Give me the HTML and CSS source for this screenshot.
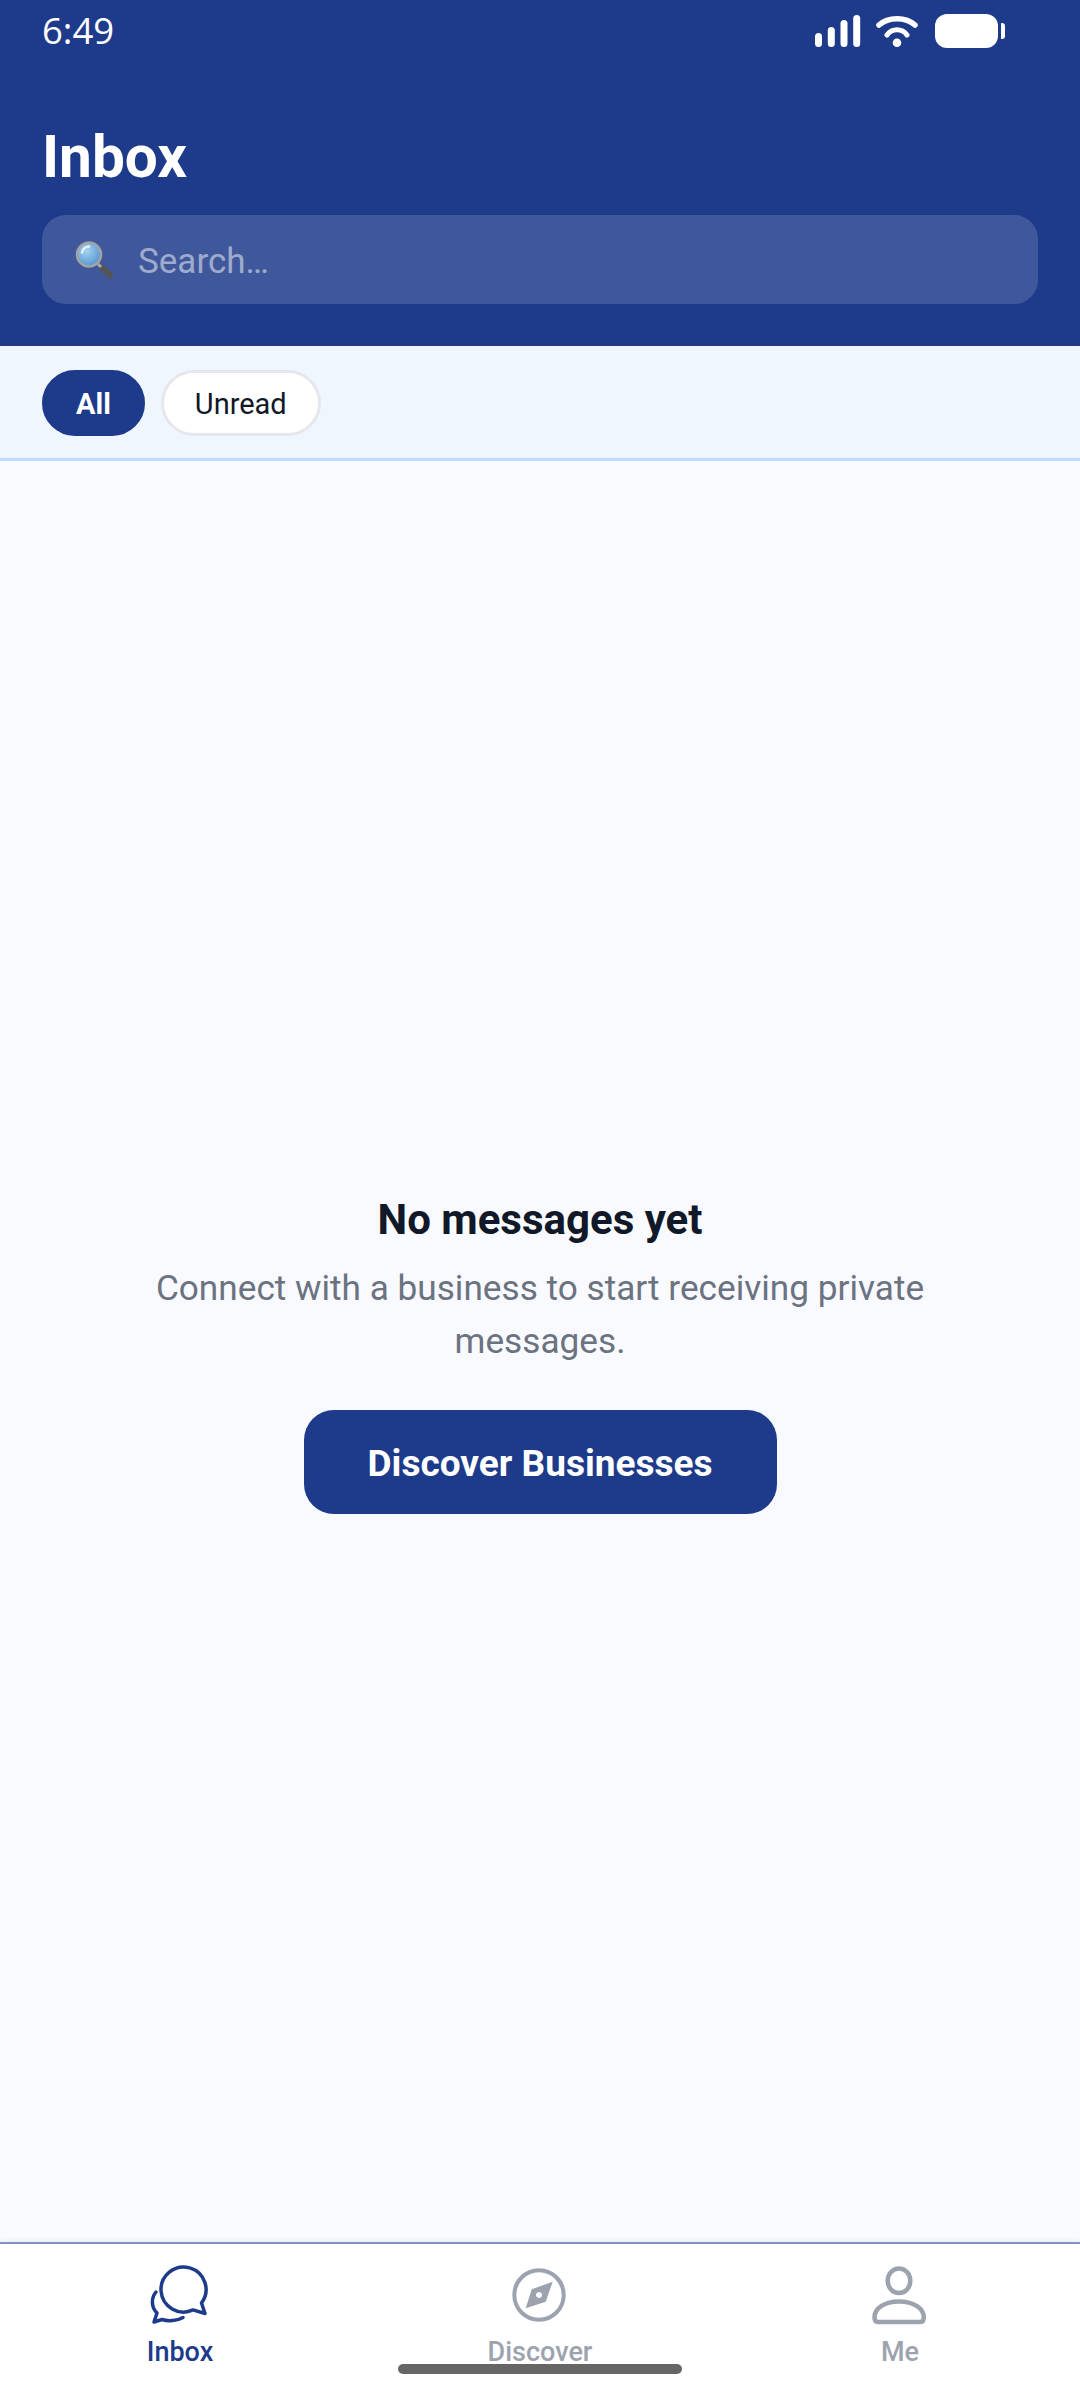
FILE: index.html
```html
<!DOCTYPE html>
<html lang="en">
<head>
    <meta charset="UTF-8">
    <meta name="viewport" content="width=device-width, initial-scale=1.0">
    <title>Inbox</title>
    <link rel="stylesheet" href="styles.css">
</head>
<body>
    <div class="app">
        <header class="header">
            <div class="status-bar">
                <span class="status-time">6:49</span>
                <div class="status-icons">
                    <svg width="46" height="34" viewBox="0 0 46 34">
                        <g fill="none" stroke="#fff" stroke-width="7" stroke-linecap="round">
                            <path d="M3.500 22.500V29.500"/>
                            <path d="M16.300 16.500V29.500"/>
                            <path d="M29 9.500V29.500"/>
                            <path d="M41.700 4.500V29.500"/>
                        </g>
                    </svg>
                    <svg class="wifi" width="44" height="34" viewBox="0 0 44 34">
                        <g fill="none" stroke="#fff" stroke-linecap="round">
                            <path stroke-width="5.500" d="M4 11C13 2.500 31 2.500 40 11"/>
                            <path stroke-width="5" d="M12 21C17 14 27 14 32 21"/>
                        </g>
                        <circle cx="22" cy="28.700" r="4.300" fill="#fff"/>
                    </svg>
                    <div class="battery">
                        <div class="battery-body"></div>
                        <div class="battery-tip"></div>
                    </div>
                </div>
            </div>
            <h1 class="header-title">Inbox</h1>
            <div class="search">
                <svg class="search-icon" width="40" height="42" viewBox="0 0 40 42">
                    <defs>
                        <radialGradient id="lens" cx="0.4" cy="0.35" r="0.7">
                            <stop offset="0" stop-color="#a5d3f2"/>
                            <stop offset="1" stop-color="#4f94cf"/>
                        </radialGradient>
                    </defs>
                    <path d="M25 27l12 11" stroke="#555" stroke-width="6"/>
                    <path d="M23 25l3 3" stroke="#aaa" stroke-width="3"/>
                    <circle cx="14" cy="15.500" r="12" fill="url(#lens)" stroke="#a3a3a3" stroke-width="2.500"/>
                    <path d="M7 13.500c1-4 4-6 7-6" fill="none" stroke="#e4f2fc" stroke-width="2.500" stroke-linecap="round"/>
                </svg>
                <span class="search-placeholder">Search…</span>
            </div>
        </header>

        <div class="filters">
            <button class="chip chip-active">All</button>
            <button class="chip">Unread</button>
        </div>

        <main class="empty">
            <h2 class="empty-title">No messages yet</h2>
            <p class="empty-text">Connect with a business to start receiving private messages.</p>
            <button class="empty-button">Discover Businesses</button>
        </main>

        <nav class="tabbar">
            <div class="tab tab-active">
                <svg width="60" height="60" viewBox="0 0 60 60" fill="none" stroke="#1e3a8a" stroke-width="3.500" stroke-linecap="round" stroke-linejoin="round">
                    <path d="M51.500 38A22.500 22.500 0 1 0 43 44.900L55 48.500Z"/>
                    <path d="M6 27C1 33 1 42 7 48L4 57L12 54.500C18 56.500 27 56 33 52.500"/>
                </svg>
                <span class="tab-label">Inbox</span>
            </div>
            <div class="tab">
                <svg width="60" height="60" viewBox="0 0 60 60">
                    <circle cx="29" cy="30" r="24.700" fill="none" stroke="#9ca3af" stroke-width="4"/>
                    <path fill-rule="evenodd" fill="#9ca3af" d="M42.700 16.700L35.700 36.700L15.700 43.300L21.700 24.300ZM29 27a3 3 0 1 0 .01 0Z"/>
                </svg>
                <span class="tab-label">Discover</span>
            </div>
            <div class="tab">
                <svg width="60" height="60" viewBox="0 0 60 60" fill="none" stroke="#9ca3af" stroke-width="4.500" stroke-linejoin="round">
                    <ellipse cx="29" cy="15.700" rx="11.300" ry="12.300"/>
                    <path d="M4.500 52.500C4.500 43 15 36.500 29 36.500C43 36.500 53.800 43 53.800 52.500C53.800 55.500 52.500 57 50 57H8C5.500 57 4.500 55.500 4.500 52.500Z"/>
                </svg>
                <span class="tab-label">Me</span>
            </div>
            <div class="home-indicator"></div>
        </nav>
    </div>
</body>
</html>
```

FILE: styles.css
```css
* {
    box-sizing: border-box;
}

body {
    font-family: Roboto, Arial, sans-serif;
    margin: 0;
    padding: 0;
    background-color: #f8faff;
}

.app {
    display: flex;
    flex-direction: column;
    width: 1080px;
    height: 2400px;
    overflow: hidden;
}

.header {
    height: 346px;
    padding: 0 42px;
    background-color: #1e3a8a;
    color: #fff;
}

.status-bar {
    display: flex;
    justify-content: space-between;
    align-items: center;
    height: 62px;
}

.status-time {
    margin-top: -2px;
    font-family: "Open Sans", sans-serif;
    font-size: 36.500px;
    line-height: 60px;
}

.status-icons {
    display: flex;
    align-items: center;
    margin-right: 33px;
}

.wifi {
    margin-left: 14px;
}

.battery {
    display: flex;
    align-items: center;
    margin-left: 16px;
}

.battery-body {
    width: 63px;
    height: 34px;
    border-radius: 12px;
    background-color: #fff;
}

.battery-tip {
    width: 4px;
    height: 16px;
    margin-left: 3px;
    border-radius: 0 3px 3px 0;
    background-color: #fff;
}

.header-title {
    margin: 62px 0 0;
    font-size: 58.500px;
    line-height: 66px;
    font-weight: 700;
}

.search {
    display: flex;
    align-items: center;
    height: 89px;
    margin-top: 25px;
    padding-left: 33px;
    border-radius: 24px;
    background-color: rgba(255, 255, 255, 0.15);
}

.search-placeholder {
    margin-left: 23px;
    padding-top: 3px;
    font-size: 35px;
    color: rgba(255, 255, 255, 0.5);
}

.filters {
    display: flex;
    gap: 16px;
    height: 115px;
    padding: 24px 42px 0;
    border-bottom: 3px solid #bfdbfe;
    background-color: #eff6ff;
}

.chip {
    height: 66px;
    padding: 1px 31px 0;
    border: 3px solid #e5e7eb;
    border-radius: 33px;
    background-color: #fff;
    color: #111827;
    font-family: Roboto, Arial, sans-serif;
    font-size: 29px;
}

.chip-active {
    border-color: #1e3a8a;
    background-color: #1e3a8a;
    color: #fff;
    font-weight: 700;
}

.empty {
    flex: 1;
    display: flex;
    flex-direction: column;
    align-items: center;
    justify-content: center;
    padding: 3px 140px 0;
    text-align: center;
}

.empty-title {
    margin: 0 0 14px;
    font-size: 42px;
    line-height: 56px;
    font-weight: 700;
    color: #111827;
}

.empty-text {
    margin: 0 0 42px;
    font-size: 35.200px;
    line-height: 53px;
    color: #6b7280;
}

.empty-button {
    width: 473px;
    height: 104px;
    padding: 2px 0 0;
    border: none;
    border-radius: 30px;
    background-color: #1e3a8a;
    color: #fff;
    font-family: Roboto, Arial, sans-serif;
    font-size: 37px;
    font-weight: 700;
}

.tabbar {
    position: relative;
    display: flex;
    justify-content: space-around;
    height: 158px;
    padding-top: 21px;
    border-top: 2px solid #8093c4;
    background-color: #fff;
    box-shadow: 0 -2px 4px rgba(0, 0, 0, 0.05);
}

.tab {
    display: flex;
    flex-direction: column;
    align-items: center;
    width: 360px;
}

.tab-label {
    margin-top: 10px;
    font-size: 27px;
    line-height: 34px;
    font-weight: 500;
    color: #9ca3af;
}

.tab-active .tab-label {
    color: #1e3a8a;
}

.home-indicator {
    position: absolute;
    left: 398px;
    top: 120px;
    width: 284px;
    height: 10px;
    border-radius: 5px;
    background-color: #666;
}
```
